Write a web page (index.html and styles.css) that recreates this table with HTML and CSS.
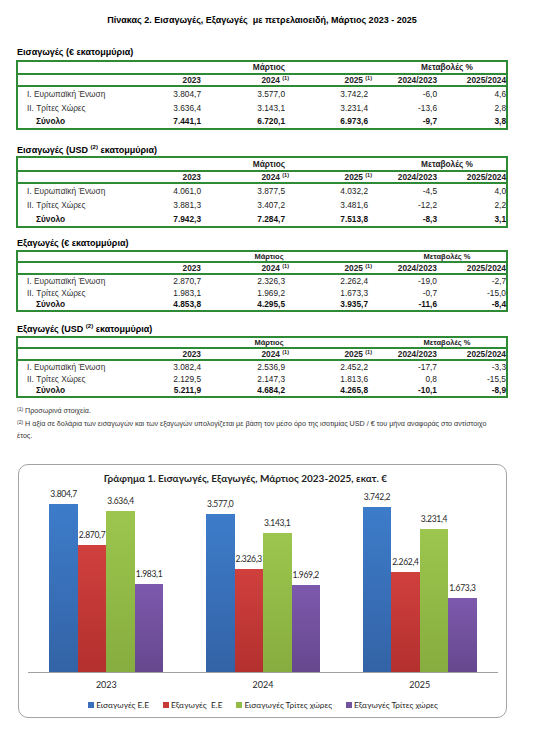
FILE: index.html
```html
<!DOCTYPE html>
<html lang="el">
<head>
    <meta charset="UTF-8">
    <meta name="viewport" content="width=device-width, initial-scale=1.0">
    <title>Πίνακας 2. Εισαγωγές, Εξαγωγές με πετρελαιοειδή</title>
    <link rel="stylesheet" href="styles.css">
</head>
<body>
    <div class="page">
        <h1 class="page-title">Πίνακας 2. Εισαγωγές, Εξαγωγές&nbsp; με πετρελαιοειδή, Μάρτιος 2023 - 2025</h1>

        <!-- Imports EUR -->
        <h2 class="block-title block-1">Εισαγωγές (€ εκατομμύρια)</h2>
        <div class="data-box size-a">
            <table class="data-table">
                <colgroup>
                    <col class="c-label"><col class="c-2023"><col class="c-2024"><col class="c-2025"><col class="c-ch1"><col class="c-ch2">
                </colgroup>
                <thead>
                    <tr class="head-top">
                        <th></th>
                        <th colspan="3" class="span-month">Μάρτιος</th>
                        <th colspan="2" class="span-change">Μεταβολές %</th>
                    </tr>
                    <tr class="head-years">
                        <th></th>
                        <th>2023</th>
                        <th>2024 <sup>(1)</sup></th>
                        <th>2025 <sup>(1)</sup></th>
                        <th>2024/2023</th>
                        <th>2025/2024</th>
                    </tr>
                </thead>
                <tbody>
                    <tr>
                        <td class="label">I. Ευρωπαϊκή Ένωση</td>
                        <td>3.804,7</td><td class="inset">3.577,0</td><td class="inset">3.742,2</td><td>-6,0</td><td>4,6</td>
                    </tr>
                    <tr>
                        <td class="label">II. Τρίτες Χώρες</td>
                        <td>3.636,4</td><td class="inset">3.143,1</td><td class="inset">3.231,4</td><td>-13,6</td><td>2,8</td>
                    </tr>
                    <tr class="total">
                        <td class="label">Σύνολο</td>
                        <td>7.441,1</td><td class="inset">6.720,1</td><td class="inset">6.973,6</td><td>-9,7</td><td>3,8</td>
                    </tr>
                </tbody>
            </table>
        </div>

        <!-- Imports USD -->
        <h2 class="block-title block-2">Εισαγωγές (USD <sup>(2)</sup> εκατομμύρια)</h2>
        <div class="data-box size-b">
            <table class="data-table">
                <colgroup>
                    <col class="c-label"><col class="c-2023"><col class="c-2024"><col class="c-2025"><col class="c-ch1"><col class="c-ch2">
                </colgroup>
                <thead>
                    <tr class="head-top">
                        <th></th>
                        <th colspan="3" class="span-month">Μάρτιος</th>
                        <th colspan="2" class="span-change">Μεταβολές %</th>
                    </tr>
                    <tr class="head-years">
                        <th></th>
                        <th>2023</th>
                        <th>2024 <sup>(1)</sup></th>
                        <th>2025 <sup>(1)</sup></th>
                        <th>2024/2023</th>
                        <th>2025/2024</th>
                    </tr>
                </thead>
                <tbody>
                    <tr>
                        <td class="label">I. Ευρωπαϊκή Ένωση</td>
                        <td>4.061,0</td><td class="inset">3.877,5</td><td class="inset">4.032,2</td><td>-4,5</td><td>4,0</td>
                    </tr>
                    <tr>
                        <td class="label">II. Τρίτες Χώρες</td>
                        <td>3.881,3</td><td class="inset">3.407,2</td><td class="inset">3.481,6</td><td>-12,2</td><td>2,2</td>
                    </tr>
                    <tr class="total">
                        <td class="label">Σύνολο</td>
                        <td>7.942,3</td><td class="inset">7.284,7</td><td class="inset">7.513,8</td><td>-8,3</td><td>3,1</td>
                    </tr>
                </tbody>
            </table>
        </div>

        <!-- Exports EUR -->
        <h2 class="block-title block-3">Εξαγωγές (€ εκατομμύρια)</h2>
        <div class="data-box size-c">
            <table class="data-table">
                <colgroup>
                    <col class="c-label"><col class="c-2023"><col class="c-2024"><col class="c-2025"><col class="c-ch1"><col class="c-ch2">
                </colgroup>
                <thead>
                    <tr class="head-top">
                        <th></th>
                        <th colspan="3" class="span-month">Μάρτιος</th>
                        <th colspan="2" class="span-change">Μεταβολές %</th>
                    </tr>
                    <tr class="head-years">
                        <th></th>
                        <th>2023</th>
                        <th>2024 <sup>(1)</sup></th>
                        <th>2025 <sup>(1)</sup></th>
                        <th>2024/2023</th>
                        <th>2025/2024</th>
                    </tr>
                </thead>
                <tbody>
                    <tr>
                        <td class="label">I. Ευρωπαϊκή Ένωση</td>
                        <td>2.870,7</td><td class="inset">2.326,3</td><td class="inset">2.262,4</td><td>-19,0</td><td>-2,7</td>
                    </tr>
                    <tr>
                        <td class="label">II. Τρίτες Χώρες</td>
                        <td>1.983,1</td><td class="inset">1.969,2</td><td class="inset">1.673,3</td><td>-0,7</td><td>-15,0</td>
                    </tr>
                    <tr class="total">
                        <td class="label">Σύνολο</td>
                        <td>4.853,8</td><td class="inset">4.295,5</td><td class="inset">3.935,7</td><td>-11,6</td><td>-8,4</td>
                    </tr>
                </tbody>
            </table>
        </div>

        <!-- Exports USD -->
        <h2 class="block-title block-4">Εξαγωγές (USD <sup>(2)</sup> εκατομμύρια)</h2>
        <div class="data-box size-c">
            <table class="data-table">
                <colgroup>
                    <col class="c-label"><col class="c-2023"><col class="c-2024"><col class="c-2025"><col class="c-ch1"><col class="c-ch2">
                </colgroup>
                <thead>
                    <tr class="head-top">
                        <th></th>
                        <th colspan="3" class="span-month">Μάρτιος</th>
                        <th colspan="2" class="span-change">Μεταβολές %</th>
                    </tr>
                    <tr class="head-years">
                        <th></th>
                        <th>2023</th>
                        <th>2024 <sup>(1)</sup></th>
                        <th>2025 <sup>(1)</sup></th>
                        <th>2024/2023</th>
                        <th>2025/2024</th>
                    </tr>
                </thead>
                <tbody>
                    <tr>
                        <td class="label">I. Ευρωπαϊκή Ένωση</td>
                        <td>3.082,4</td><td class="inset">2.536,9</td><td class="inset">2.452,2</td><td>-17,7</td><td>-3,3</td>
                    </tr>
                    <tr>
                        <td class="label">II. Τρίτες Χώρες</td>
                        <td>2.129,5</td><td class="inset">2.147,3</td><td class="inset">1.813,6</td><td>0,8</td><td>-15,5</td>
                    </tr>
                    <tr class="total">
                        <td class="label">Σύνολο</td>
                        <td>5.211,9</td><td class="inset">4.684,2</td><td class="inset">4.265,8</td><td>-10,1</td><td>-8,9</td>
                    </tr>
                </tbody>
            </table>
        </div>

        <!-- Notes -->
        <p class="note note-1"><sup>(1)</sup> Προσωρινά στοιχεία.</p>
        <p class="note note-2"><sup>(2)</sup> Η αξία σε δολάρια των εισαγωγών και των εξαγωγών υπολογίζεται με βάση τον μέσο όρο της ισοτιμίας USD / € του μήνα αναφοράς στο αντίστοιχο έτος.</p>

        <!-- Chart -->
        <figure class="chart">
            <figcaption class="chart-title">Γράφημα 1. Εισαγωγές, Εξαγωγές, Μάρτιος 2023-2025, εκατ. €</figcaption>
            <div class="chart-plot">
                <div class="chart-group">
                    <div class="bar-col"><span class="bar-value">3.804,7</span><div class="bar bar-blue" style="height:168.0px"></div></div>
                    <div class="bar-col"><span class="bar-value">2.870,7</span><div class="bar bar-red" style="height:126.8px"></div></div>
                    <div class="bar-col"><span class="bar-value">3.636,4</span><div class="bar bar-green" style="height:160.6px"></div></div>
                    <div class="bar-col"><span class="bar-value">1.983,1</span><div class="bar bar-purple" style="height:87.6px"></div></div>
                </div>
                <div class="chart-group">
                    <div class="bar-col"><span class="bar-value">3.577,0</span><div class="bar bar-blue" style="height:158.0px"></div></div>
                    <div class="bar-col"><span class="bar-value">2.326,3</span><div class="bar bar-red" style="height:102.7px"></div></div>
                    <div class="bar-col"><span class="bar-value">3.143,1</span><div class="bar bar-green" style="height:138.8px"></div></div>
                    <div class="bar-col"><span class="bar-value">1.969,2</span><div class="bar bar-purple" style="height:87.0px"></div></div>
                </div>
                <div class="chart-group">
                    <div class="bar-col"><span class="bar-value">3.742,2</span><div class="bar bar-blue" style="height:165.3px"></div></div>
                    <div class="bar-col"><span class="bar-value">2.262,4</span><div class="bar bar-red" style="height:99.9px"></div></div>
                    <div class="bar-col"><span class="bar-value">3.231,4</span><div class="bar bar-green" style="height:142.7px"></div></div>
                    <div class="bar-col"><span class="bar-value">1.673,3</span><div class="bar bar-purple" style="height:73.9px"></div></div>
                </div>
            </div>
            <div class="chart-years">
                <span>2023</span>
                <span>2024</span>
                <span>2025</span>
            </div>
            <ul class="chart-legend">
                <li class="key-blue">Εισαγωγές Ε.Ε</li>
                <li class="key-red">Εξαγωγές&nbsp; Ε.Ε</li>
                <li class="key-green">Εισαγωγές Τρίτες χώρες</li>
                <li class="key-purple">Εξαγωγές Τρίτες χώρες</li>
            </ul>
        </figure>
    </div>
</body>
</html>
```

FILE: styles.css
```css
* {
    margin: 0;
    padding: 0;
    box-sizing: border-box;
}

body {
    font-family: "Liberation Sans", Arial, sans-serif;
    background: #fff;
    color: #000;
}

.page {
    width: 548px;
    padding: 14px 40px 0 16px;
}

.page-title {
    font-size: 9px;
    font-weight: bold;
    line-height: 12px;
    text-align: center;
}

sup {
    font-size: 5.5px;
    line-height: 0;
    vertical-align: 3px;
}

/* section headings */
.block-title {
    font-size: 9px;
    font-weight: bold;
    line-height: 11px;
    padding-left: 1px;
}

.block-title sup {
    font-size: 6px;
    vertical-align: 4px;
}

.block-1 { margin: 21px 0 2px; }
.block-2 { margin: 15px 0 0; }
.block-3 { margin: 10px 0 1px; }
.block-4 { margin: 12px 0 1px; }

/* tables */
.data-box {
    border: 2px solid #2f8a36;
}

.data-table {
    width: 100%;
    table-layout: fixed;
    border-collapse: separate;
    border-spacing: 0;
    font-size: 8.3px;
    line-height: 9px;
}

.c-label { width: 112px; }
.c-2023 { width: 71px; }
.c-2024 { width: 88px; }
.c-2025 { width: 83px; }
.c-ch1 { width: 65px; }
.c-ch2 { width: 69px; }

.data-table th,
.data-table td {
    padding: 0;
    text-align: right;
    white-space: nowrap;
    color: #222;
}

.data-table th {
    font-weight: bold;
}

.head-top th,
.head-years th {
    border-bottom: 2px solid #2f8a36;
}

.span-month {
    text-align: center !important;
    padding-left: 36px !important;
}

.span-change {
    text-align: center !important;
    padding-left: 16px !important;
}

.data-table td.inset {
    padding-right: 4px;
}

.data-table td.label {
    text-align: left;
    padding-left: 9px;
    color: #333;
}

.total td {
    font-weight: bold;
    color: #111;
}

.total td.label {
    padding-left: 18px;
    color: #111;
}

/* row heights include the 2px rule under the header rows */
.size-a .head-top th { height: 13px; }
.size-a .head-years th { height: 12px; }
.size-a tbody td { height: 14px; }
.size-a tbody tr.total td { height: 13px; }

.size-b .head-top th { height: 14px; }
.size-b .head-years th { height: 12px; }
.size-b tbody td { height: 14px; }

.size-c .head-top th { height: 10px; font-size: 7.5px; }
.size-c .head-years th { height: 12px; }
.size-c tbody td { height: 12px; }
.size-c tbody tr.total td { height: 11px; }

/* footnotes */
.note {
    font-size: 7.15px;
    line-height: 12px;
    color: #333;
    padding-left: 1px;
}

.note sup {
    font-size: 5px;
    vertical-align: 2px;
}

.note-1 { margin-top: 7px; }
.note-2 {
    margin-top: 1px;
    padding-right: 10px;
}

/* chart */
.chart {
    margin: 22px 1px 0 2px;
    height: 254px;
    border: 1px solid #a3a3a3;
    border-radius: 10px;
    padding: 7px 8px 6px 9px;
    font-family: Lato, "Open Sans", sans-serif;
    color: #333;
}

.chart-title {
    font-size: 10px;
    font-weight: bold;
    line-height: 12px;
    text-align: center;
    padding-right: 35px;
    color: #1f1f1f;
}

.chart-plot {
    display: flex;
    height: 189px;
    border-bottom: 1px solid #a0a0a0;
}

.chart-group {
    flex: 1;
    display: flex;
    justify-content: center;
}

.bar-col {
    width: 28.5px;
    display: flex;
    flex-direction: column;
    justify-content: flex-end;
    align-items: center;
}

.bar-value {
    font-size: 8.5px;
    line-height: 12px;
    margin-bottom: 4px;
    white-space: nowrap;
    letter-spacing: -0.3px;
    color: #262626;
}

.bar {
    width: 100%;
}

.bar-blue { background: linear-gradient(#3d7cca, #3363a6); }
.bar-red { background: linear-gradient(#d0403d, #b3302f); }
.bar-green { background: linear-gradient(#9cc64e, #86ad3f); }
.bar-purple { background: linear-gradient(#7d59ad, #66488e); }

.chart-years {
    display: flex;
    margin-top: 6px;
    font-size: 9px;
    line-height: 12px;
    color: #262626;
}

.chart-years span {
    flex: 1;
    text-align: center;
}

.chart-legend {
    list-style: none;
    display: flex;
    justify-content: center;
    gap: 14px;
    margin-top: 8px;
    font-size: 8.3px;
    line-height: 12px;
    color: #262626;
}

.chart-legend li {
    display: flex;
    align-items: center;
    gap: 2px;
}

.chart-legend li::before {
    content: "";
    width: 6px;
    height: 6px;
}

.key-blue::before { background: #3a70bb; }
.key-red::before { background: #c63a38; }
.key-green::before { background: #92bb47; }
.key-purple::before { background: #73529e; }
```
